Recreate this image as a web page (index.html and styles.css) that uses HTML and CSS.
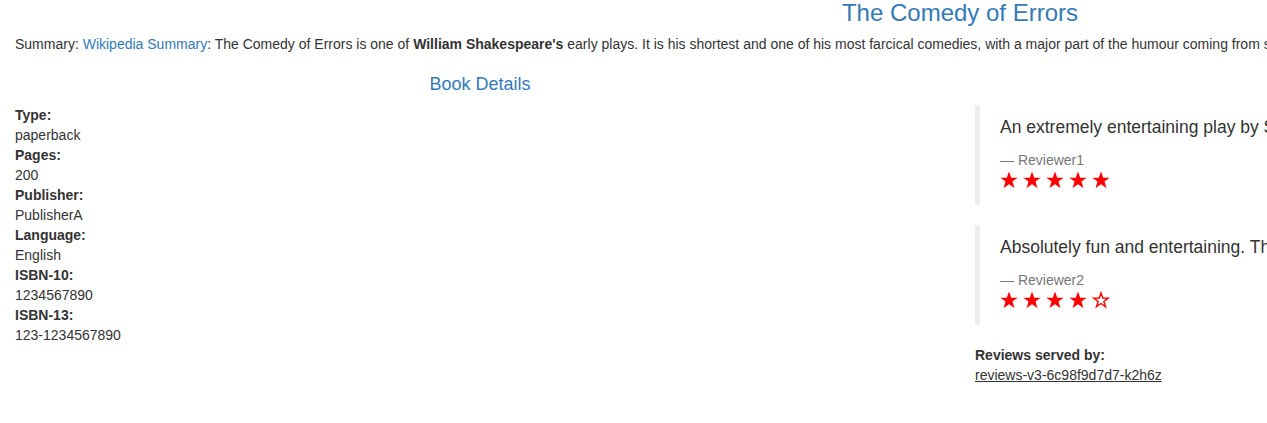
FILE: index.html
```html
<!DOCTYPE html>
<html>
<head>
<meta charset="utf-8">
<title>Bookinfo</title>
<link rel="stylesheet" href="styles.css">
</head>
<body>
<div class="container">
  <div class="row">
    <div class="col-full">
      <h3 class="title">The Comedy of Errors</h3>
      <p class="summary">Summary: <a href="#">Wikipedia Summary</a>: The Comedy of Errors is one of <b>William Shakespeare's</b> early plays. It is his shortest and one of his most farcical comedies, with a major part of the humour coming from slapstick and mistaken identity, in addition to puns and word play.</p>
    </div>
  </div>
  <div class="row">
    <div class="col-half">
      <h4 class="subtitle">Book Details</h4>
      <dl class="details">
        <dt>Type:</dt><dd>paperback</dd>
        <dt>Pages:</dt><dd>200</dd>
        <dt>Publisher:</dt><dd>PublisherA</dd>
        <dt>Language:</dt><dd>English</dd>
        <dt>ISBN-10:</dt><dd>1234567890</dd>
        <dt>ISBN-13:</dt><dd>123-1234567890</dd>
      </dl>
    </div>
    <div class="col-half">
      <h4 class="subtitle">Book Reviews</h4>
      <blockquote class="review">
        <p>An extremely entertaining play by Shakespeare. The slapstick humour is refreshing!</p>
        <small>Reviewer1</small>
        <span class="stars"><svg class="star" viewBox="0 0 20 20"><polygon points="10,0.6 12.5,7.4 19.6,7.5 13.9,11.8 16,18.8 10,14.6 4,18.8 6.1,11.8 0.4,7.5 7.5,7.4"/></svg> <svg class="star" viewBox="0 0 20 20"><polygon points="10,0.6 12.5,7.4 19.6,7.5 13.9,11.8 16,18.8 10,14.6 4,18.8 6.1,11.8 0.4,7.5 7.5,7.4"/></svg> <svg class="star" viewBox="0 0 20 20"><polygon points="10,0.6 12.5,7.4 19.6,7.5 13.9,11.8 16,18.8 10,14.6 4,18.8 6.1,11.8 0.4,7.5 7.5,7.4"/></svg> <svg class="star" viewBox="0 0 20 20"><polygon points="10,0.6 12.5,7.4 19.6,7.5 13.9,11.8 16,18.8 10,14.6 4,18.8 6.1,11.8 0.4,7.5 7.5,7.4"/></svg> <svg class="star" viewBox="0 0 20 20"><polygon points="10,0.6 12.5,7.4 19.6,7.5 13.9,11.8 16,18.8 10,14.6 4,18.8 6.1,11.8 0.4,7.5 7.5,7.4"/></svg></span>
      </blockquote>
      <blockquote class="review">
        <p>Absolutely fun and entertaining. The play lacks thematic depth when compared to other plays by Shakespeare.</p>
        <small>Reviewer2</small>
        <span class="stars"><svg class="star" viewBox="0 0 20 20"><polygon points="10,0.6 12.5,7.4 19.6,7.5 13.9,11.8 16,18.8 10,14.6 4,18.8 6.1,11.8 0.4,7.5 7.5,7.4"/></svg> <svg class="star" viewBox="0 0 20 20"><polygon points="10,0.6 12.5,7.4 19.6,7.5 13.9,11.8 16,18.8 10,14.6 4,18.8 6.1,11.8 0.4,7.5 7.5,7.4"/></svg> <svg class="star" viewBox="0 0 20 20"><polygon points="10,0.6 12.5,7.4 19.6,7.5 13.9,11.8 16,18.8 10,14.6 4,18.8 6.1,11.8 0.4,7.5 7.5,7.4"/></svg> <svg class="star" viewBox="0 0 20 20"><polygon points="10,0.6 12.5,7.4 19.6,7.5 13.9,11.8 16,18.8 10,14.6 4,18.8 6.1,11.8 0.4,7.5 7.5,7.4"/></svg> <svg class="star star-empty" viewBox="0 0 20 20"><polygon points="10,2.2 12,7.9 18.1,8 13.2,11.6 15,17.4 10,13.9 5,17.4 6.8,11.6 1.9,8 8,7.9"/></svg></span>
      </blockquote>
      <dl class="served">
        <dt>Reviews served by:</dt>
        <u>reviews-v3-6c98f9d7d7-k2h6z</u>
      </dl>
    </div>
  </div>
</div>
</body>
</html>
```
FILE: styles.css
```css
html, body {
  margin: 0;
  padding: 0;
  overflow: hidden;
  background: #fff;
}
body {
  font-family: "Liberation Sans", Arial, Helvetica, sans-serif;
  font-size: 14px;
  line-height: 1.42857143;
  color: #333;
}
.container {
  width: 1920px;
  padding: 0 15px;
  box-sizing: border-box;
}
.row {
  display: flex;
  margin: 0 -15px;
}
.col-full {
  flex: 0 0 100%;
  padding: 0 15px;
  box-sizing: border-box;
}
.col-half {
  flex: 0 0 50%;
  padding: 0 15px;
  box-sizing: border-box;
}
.title {
  margin: 0 0 8px;
  font-size: 24px;
  font-weight: 500;
  line-height: 1.1;
  text-align: center;
  color: #337ab7;
}
.summary {
  margin: 0 0 11px;
}
.summary a {
  color: #337ab7;
  text-decoration: none;
}
.subtitle {
  margin: 10px 0 10px;
  font-size: 18px;
  font-weight: 500;
  line-height: 1.1;
  text-align: center;
  color: #337ab7;
}
.details, .served {
  margin: 0 0 20px;
}
.details dt, .served dt {
  font-weight: bold;
}
.details dd {
  margin: 0;
}
.review {
  margin: 0 0 20px;
  padding: 10px 20px;
  border-left: 5px solid #eee;
  font-size: 17.5px;
  white-space: nowrap;
}
.review p {
  margin: 0 0 10px;
}
.review small {
  display: block;
  font-size: 80%;
  line-height: 1.42857143;
  color: #777;
}
.review small::before {
  content: "\2014 \00A0";
}
.stars {
  font-size: 17.5px;
}
.star {
  width: 18px;
  height: 18px;
  vertical-align: -1px;
  fill: #f00;
}
.star-empty {
  fill: none;
  stroke: #f00;
  stroke-width: 1.6;
}
```
